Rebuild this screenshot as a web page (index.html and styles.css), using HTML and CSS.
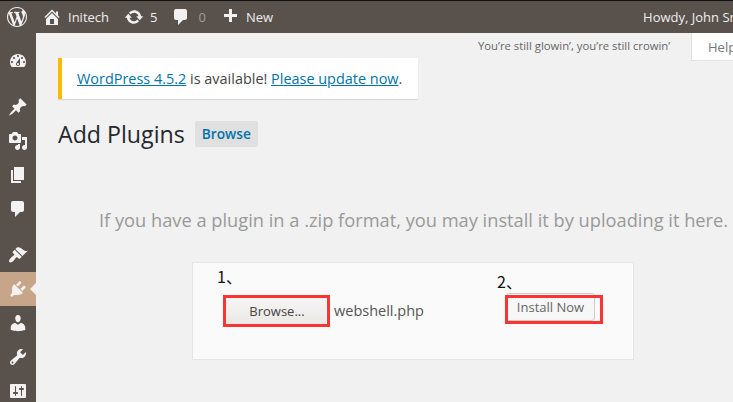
FILE: index.html
```
<!DOCTYPE html>
<html lang="en">
<head>
<meta charset="utf-8">
<title>Add Plugins</title>
<link rel="stylesheet" href="styles.css">
</head>
<body>
<header class="topbar">
  <svg class="logo" viewBox="0 0 20 20"><path d="M20 10c0-5.51-4.49-10-10-10C4.48 0 0 4.49 0 10c0 5.52 4.48 10 10 10 5.51 0 10-4.48 10-10zM7.78 15.37L4.37 6.22c.55-.02 1.17-.08 1.17-.08.5-.06.44-1.13-.06-1.11 0 0-1.45.11-2.37.11-.18 0-.37 0-.58-.01C4.12 2.69 6.87 1.11 10 1.11c2.33 0 4.45.87 6.05 2.34-.68-.11-1.65.39-1.65 1.58 0 .74.45 1.36.9 2.1.35.61.55 1.36.55 2.46 0 1.49-1.4 5-1.4 5l-3.03-8.37c.54-.02.82-.17.82-.17.5-.05.44-1.25-.06-1.22 0 0-1.44.12-2.38.12-.87 0-2.33-.12-2.33-.12-.5-.03-.56 1.2-.06 1.22l.92.08 1.26 3.41zM17.41 10c.24-.64.74-1.87.43-4.25.7 1.29 1.05 2.71 1.05 4.25 0 3.29-1.73 6.24-4.4 7.78.97-2.59 1.94-5.2 2.92-7.78zM6.1 18.09C3.12 16.65 1.11 13.53 1.11 10c0-1.3.23-2.48.72-3.59C3.25 10.3 4.67 14.2 6.1 18.09zm4.03-6.63l2.58 6.98c-.86.29-1.76.45-2.71.45-.79 0-1.57-.11-2.29-.33.81-2.38 1.62-4.74 2.42-7.1z"/></svg>
  <svg class="baricon home" viewBox="0 0 20 20"><path d="M16 8.5l1.53 1.53-1.06 1.06L10 4.62l-6.47 6.47-1.06-1.06L10 2.5l4 4v-2h2v4zm-6-2.46l6 5.99V18H4v-5.97zM12 17v-5H8v5h4z"/></svg>
  <span class="bartext site">Initech</span>
  <svg class="baricon update" viewBox="0 0 20 20"><path d="M10.2 3.28c3.53 0 6.43 2.61 6.92 6h2.08l-3.5 4-3.5-4h2.32c-.45-1.97-2.21-3.45-4.32-3.45-1.45 0-2.73.71-3.54 1.78L4.95 5.66C6.23 4.2 8.11 3.28 10.2 3.28zm-.4 13.44c-3.52 0-6.43-2.61-6.92-6H.8l3.5-4c1.17 1.33 2.33 2.67 3.5 4H5.48c.45 1.97 2.21 3.45 4.32 3.45 1.45 0 2.73-.71 3.54-1.78l1.71 1.95c-1.28 1.46-3.15 2.38-5.25 2.38z"/></svg>
  <span class="bartext count">5</span>
  <svg class="baricon bubble" viewBox="0 0 20 20"><path d="M5 2h9c1.1 0 2 .9 2 2v7c0 1.1-.9 2-2 2h-2l-5 5v-5H5c-1.1 0-2-.9-2-2V4c0-1.1.9-2 2-2z"/></svg>
  <span class="bartext zero">0</span>
  <svg class="baricon plus" viewBox="0 0 20 20"><path d="M17 7v3h-5v5H9v-5H4V7h5V2h3v5h5z"/></svg>
  <span class="bartext new">New</span>
  <span class="bartext howdy">Howdy, John Smith</span>
</header>
<div class="layout">
  <nav class="sidebar">
    <a class="menuitem first"><svg viewBox="0 0 20 20"><path d="M3.76 16h12.48c1.1-1.37 1.76-3.11 1.76-5 0-4.42-3.58-8-8-8s-8 3.58-8 8c0 1.89.66 3.63 1.76 5zM10 4c.55 0 1 .45 1 1s-.45 1-1 1-1-.45-1-1 .45-1 1-1zM6 6c.55 0 1 .45 1 1s-.45 1-1 1-1-.45-1-1 .45-1 1-1zm8 0c.55 0 1 .45 1 1s-.45 1-1 1-1-.45-1-1 .45-1 1-1zm-5.37 5.55L12 7v6c0 1.1-.9 2-2 2s-2-.9-2-2c0-.57.24-1.08.63-1.45zM4 10c.55 0 1 .45 1 1s-.45 1-1 1-1-.45-1-1 .45-1 1-1zm12 0c.55 0 1 .45 1 1s-.45 1-1 1-1-.45-1-1 .45-1 1-1zm-5 3c0-.55-.45-1-1-1s-1 .45-1 1 .45 1 1 1 1-.45 1-1z"/></svg></a>
    <a class="menuitem gap"><svg viewBox="0 0 20 20"><path d="M10.44 3.02l1.82-1.82 6.36 6.35-1.83 1.82c-1.05-.68-2.48-.57-3.41.36l-.75.75c-.92.93-1.04 2.35-.35 3.41l-1.83 1.82-2.41-2.41-2.8 2.79c-.42.42-3.38 2.71-3.8 2.29s1.86-3.39 2.28-3.81l2.79-2.79L4.1 9.36l1.83-1.82c1.05.69 2.48.57 3.4-.36l.75-.75c.93-.92 1.05-2.35.36-3.41z"/></svg></a>
    <a class="menuitem"><svg viewBox="0 0 20 20"><path d="M13 11V4c0-.55-.45-1-1-1h-1.67L9 1H5L3.67 3H2c-.55 0-1 .45-1 1v7c0 .55.45 1 1 1h10c.55 0 1-.45 1-1zM7 4.5c1.38 0 2.5 1.12 2.5 2.5S8.38 9.5 7 9.5 4.5 8.38 4.5 7 5.62 4.5 7 4.5zM14 6h5v10.5c0 1.38-1.12 2.5-2.5 2.5S14 17.88 14 16.5s1.12-2.5 2.5-2.5c.17 0 .34.02.5.05V9h-3V6zm-4 8.05V13h2v3.5c0 1.38-1.12 2.5-2.5 2.5S7 17.88 7 16.5 8.12 14 9.5 14c.17 0 .34.02.5.05z"/></svg></a>
    <a class="menuitem"><svg viewBox="0 0 20 20"><path d="M6 15V2h10v13H6zm-1 1h8v2H3V5h2v11z"/></svg></a>
    <a class="menuitem"><svg viewBox="0 0 20 20"><path d="M5 2h9c1.1 0 2 .9 2 2v7c0 1.1-.9 2-2 2h-2l-5 5v-5H5c-1.1 0-2-.9-2-2V4c0-1.1.9-2 2-2z"/></svg></a>
    <a class="menuitem gap"><svg viewBox="0 0 20 20"><path d="M14.48 11.06L7.41 3.99l1.5-1.5c.5-.56 2.3-.47 3.51.32 1.21.8 1.43 1.28 2.91 2.1 1.18.64 2.45 1.26 4.45.85zm-.71.71L6.7 4.7 4.93 6.47c-.39.39-.39 1.02 0 1.41l1.06 1.06c.39.39.39 1.03 0 1.42-.6.6-1.43 1.11-2.21 1.69-.35.26-.7.53-1.01.84C1.43 14.23.4 16.08 1.4 17.07c.99 1 2.84-.03 4.18-1.36.31-.31.58-.66.85-1.02.57-.78 1.08-1.61 1.69-2.21.39-.39 1.02-.39 1.41 0l1.06 1.06c.39.39 1.02.39 1.41 0z"/></svg></a>
    <a class="menuitem active"><svg viewBox="0 0 20 20"><path d="M13.11 4.36L9.87 7.6 8 5.73l3.24-3.24c.35-.34 1.05-.2 1.56.32.52.51.66 1.21.31 1.55zm-8 1.77l.91-1.12 9.01 9.01-1.19.84c-.71.71-2.63 1.16-3.82 1.16H6.14L4.9 17.26c-.59.59-1.54.59-2.12 0-.59-.58-.59-1.53 0-2.12l1.24-1.24v-3.88c0-1.13.4-3.19 1.09-3.89zm7.26 3.97l3.24-3.24c.34-.35 1.04-.21 1.55.31.52.51.66 1.21.31 1.55l-3.24 3.25z"/></svg></a>
    <a class="menuitem"><svg viewBox="0 0 20 20"><path d="M10 9.25c-2.27 0-2.73-3.44-2.73-3.44C7 4.02 7.82 2 9.97 2c2.16 0 2.98 2.02 2.71 3.81 0 0-.41 3.44-2.68 3.44zm0 2.57L12.72 10c2.39 0 4.52 2.33 4.52 4.53v2.49s-3.65 1.13-7.24 1.13c-3.65 0-7.24-1.13-7.24-1.13v-2.49c0-2.25 1.94-4.53 4.47-4.53z"/></svg></a>
    <a class="menuitem"><svg viewBox="0 0 20 20"><path d="M16.68 9.77c-1.34 1.34-3.3 1.67-4.95.99l-5.41 6.52c-.99.99-2.59.99-3.58 0s-.99-2.59 0-3.57l6.52-5.42c-.68-1.65-.35-3.61.99-4.95 1.28-1.28 3.12-1.62 4.72-1.06l-2.89 2.89 2.82 2.82 2.86-2.87c.53 1.58.18 3.39-1.08 4.65zM3.81 16.21c.4.39 1.04.39 1.43 0 .4-.4.4-1.04 0-1.43-.39-.4-1.03-.4-1.43 0-.39.39-.39 1.03 0 1.43z"/></svg></a>
    <a class="menuitem"><svg viewBox="0 0 20 20"><path d="M18 16V4c0-.55-.45-1-1-1H3c-.55 0-1 .45-1 1v12c0 .55.45 1 1 1h14c.55 0 1-.45 1-1zM8 11h1c.55 0 1 .45 1 1s-.45 1-1 1H8v1.5c0 .28-.22.5-.5.5s-.5-.22-.5-.5V13H6c-.55 0-1-.45-1-1s.45-1 1-1h1V5.5c0-.28.22-.5.5-.5s.5.22.5.5V11zm5-2h-1c-.55 0-1-.45-1-1s.45-1 1-1h1V5.5c0-.28.22-.5.5-.5s.5.22.5.5V7h1c.55 0 1 .45 1 1s-.45 1-1 1h-1v5.5c0 .28-.22.5-.5.5s-.5-.22-.5-.5V9z"/></svg></a>
  </nav>
  <main class="content">
    <div class="utility">
      <p class="quote">You’re still glowin’, you’re still crowin’</p>
      <div class="helptab">Help</div>
    </div>
    <div class="notice"><a href="#">WordPress 4.5.2</a> is available! <a href="#">Please update now</a>.</div>
    <div class="heading">
      <h1>Add Plugins</h1>
      <a class="browse-tag">Browse</a>
    </div>
    <p class="hint">If you have a plugin in a .zip format, you may install it by uploading it here.</p>
    <section class="card">
      <span class="step step-one">1、</span>
      <span class="step step-two">2、</span>
      <div class="filebox">
        <button class="filebtn">Browse...</button>
        <span class="filename">webshell.php</span>
      </div>
      <button class="install">Install Now</button>
      <span class="redbox redbox-browse"></span>
      <span class="redbox redbox-install"></span>
    </section>
  </main>
</div>
</body>
</html>
```
FILE: styles.css
```
* { box-sizing: border-box; }
html, body { margin: 0; height: 100%; overflow: hidden; }
body {
  width: 733px;
  height: 402px;
  background: #f1f1f1;
  font-family: "Open Sans", sans-serif;
  color: #444;
  display: flex;
  flex-direction: column;
}
.topbar {
  flex: none;
  height: 33px;
  background: #59524c;
  border-top: 1px solid #111;
  display: flex;
  align-items: center;
  color: #eee;
  white-space: nowrap;
  overflow: hidden;
}
.topbar svg { fill: #f1f1f1; flex: none; }
.logo { width: 20px; height: 20px; margin-left: 7px; }
.baricon { width: 20px; height: 20px; }
.home { margin-left: 15px; }
.update { margin-left: 15px; }
.bubble { margin-left: 14px; }
.plus { margin-left: 14px; }
.bartext { font-size: 13px; margin-left: 6px; }
.site { margin-left: 6px; }
.count { margin-left: 6px; }
.zero { color: #a09c98; margin-left: 7px; }
.new { margin-left: 6px; }
.howdy { margin-left: 370px; flex: none; }
.layout { flex: 1; display: flex; min-height: 0; }
.sidebar {
  flex: none;
  width: 36px;
  background: #59524c;
  padding-top: 11px;
  display: flex;
  flex-direction: column;
}
.menuitem {
  position: relative;
  flex: none;
  height: 34px;
  display: flex;
  align-items: center;
  justify-content: center;
}
.menuitem svg { width: 20px; height: 20px; fill: #f3f1f1; }
.menuitem.gap { margin-top: 12px; }
.active { background: #c7a589; }
.active::after {
  content: "";
  position: absolute;
  right: 0;
  top: 11px;
  border: 6px solid transparent;
  border-left-width: 0;
  border-right-color: #f1f1f1;
}
.content { flex: 1; min-width: 0; padding-left: 22px; overflow: hidden; }
.utility { height: 25px; display: flex; align-items: flex-start; position: relative; }
.quote { margin: 5px 0 0 420px; font-size: 11.3px; line-height: 16px; color: #666; white-space: nowrap; }
.helptab {
  position: absolute;
  left: 633px;
  top: 0;
  width: 80px;
  height: 28px;
  background: #fff;
  border: 1px solid #e1e1e1;
  border-top: 0;
  padding: 5px 0 0 16px;
  font-size: 13px;
  line-height: 18px;
  color: #72777c;
}
.notice {
  width: 360px;
  height: 41px;
  background: #fff;
  border-left: 4px solid #ffb900;
  box-shadow: 0 1px 1px rgba(0,0,0,.1);
  padding-left: 15px;
  font-size: 14.45px;
  line-height: 41px;
  white-space: nowrap;
}
.notice a { color: #0073aa; text-decoration: underline; }
.heading { display: flex; align-items: center; margin-top: 22px; height: 26px; }
h1 { margin: 0; font-size: 23.2px; font-weight: 400; line-height: 29px; color: #23282d; }
.browse-tag {
  margin-left: 10px;
  height: 26px;
  width: 63px;
  background: #e0e0e0;
  border-radius: 2px;
  text-align: center;
  font-size: 13.7px;
  font-weight: 600;
  line-height: 26px;
  color: #0073aa;
}
.hint { margin: 60px 0 0 41px; font-size: 18.26px; line-height: 25px; color: #999; white-space: nowrap; }
.card {
  position: relative;
  width: 442px;
  height: 98px;
  margin: 30px 0 0 134px;
  background: #fafafa;
  border: 1px solid #e5e5e5;
}
.step { position: absolute; font-size: 16px; line-height: 20px; color: #111; font-family: "Noto Sans CJK SC", "Open Sans", sans-serif; }
.step-one { left: 24px; top: 3px; }
.step-two { left: 304px; top: 8px; }
.filebox { position: absolute; left: 33px; top: 35px; display: flex; align-items: center; }
.filebtn {
  width: 100px;
  height: 26px;
  padding: 0 0 0 2px;
  background: linear-gradient(#f6f5f3, #ebe9e6);
  border: 0;
  font: 13px/26px "Open Sans", sans-serif;
  color: #444;
}
.filename { margin-left: 8px; font-size: 14.5px; line-height: 26px; color: #555; }
.install {
  position: absolute;
  left: 313px;
  top: 30px;
  width: 89px;
  height: 28px;
  padding: 0;
  background: #f7f7f7;
  border: 1px solid #ccc;
  border-radius: 3px;
  font: 13px/26px "Open Sans", sans-serif;
  color: #666;
}
.redbox { position: absolute; border: 3px solid #fb3333; pointer-events: none; }
.redbox-browse { left: 30px; top: 32px; width: 107px; height: 32px; }
.redbox-install { left: 312px; top: 32px; width: 98px; height: 29px; }
```
